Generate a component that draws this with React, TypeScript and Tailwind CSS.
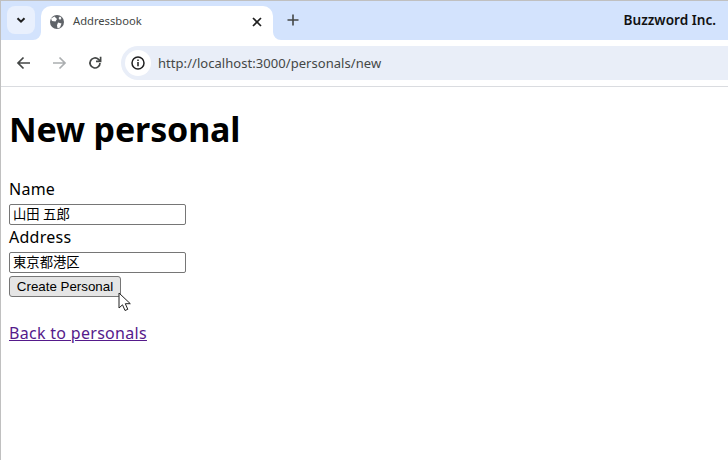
export default function App() {
  const ui = { fontFamily: '"Noto Sans","Noto Sans CJK JP",sans-serif' };
  return (
    <div className="w-[728px] h-[460px] overflow-hidden bg-white border-l border-t border-[#c0c0c0] relative flex flex-col" style={ui}>
      <div className="h-[39px] bg-[#d3e3fd] flex items-end shrink-0">
        <div className="w-[28px] h-[28px] ml-[6px] mb-[6px] rounded-lg bg-[#e9f0fd] flex items-center justify-center">
          <svg width="12" height="12" viewBox="0 0 12 12" fill="none" stroke="#1f1f1f" strokeWidth="2"><path d="M2.5 4.2 6 7.7l3.5-3.5" /></svg>
        </div>
        <div className="relative w-[232px] h-[34px] ml-[6px] bg-white rounded-t-[10px] flex items-center pl-[9px] pb-[3px]">
          <svg className="absolute left-[-8px] bottom-0" width="8" height="8" viewBox="0 0 8 8"><path d="M8 0v8H0a8 8 0 0 0 8-8z" fill="#fff" /></svg>
          <svg className="absolute right-[-8px] bottom-0" width="8" height="8" viewBox="0 0 8 8"><path d="M0 0v8h8a8 8 0 0 1-8-8z" fill="#fff" /></svg>
          <svg width="14" height="14" viewBox="0 0 14 14"><circle cx="7" cy="7" r="7" fill="#5f6368" /><path d="M4.5 1.5 7 4 5.5 6.5 2 6 1 3.5zM8 7.5l3.5 1-1.5 4-2.5.8-.5-3zM10 1.5l1.5 1.5-1.5 2L8.5 3z" fill="#fff" /></svg>
          <span className="ml-[9px] mb-[2px] text-[11.2px] leading-none text-[#444746]">Addressbook</span>
          <svg className="ml-auto mr-[11px]" width="10" height="10" viewBox="0 0 10 10" stroke="#1f1f1f" strokeWidth="1.7"><path d="M1 1l8 8M9 1l-8 8" /></svg>
        </div>
        <svg className="ml-[14px] mb-[14px]" width="12" height="12" viewBox="0 0 12 12" stroke="#444746" strokeWidth="1.6"><path d="M6 .5v11M.5 6h11" /></svg>
        <span className="ml-auto mb-[11px] mr-[12px] text-[13.6px] leading-[18px] font-semibold text-[#111]">Buzzword Inc.</span>
      </div>
      <div className="h-[46px] bg-white border-b border-[#dadce0] flex items-center shrink-0 box-content rounded-tl-[8px]">
        <div className="h-[46px] flex items-center pl-[15px]">
          <svg width="15" height="14" viewBox="0 0 15 14" fill="none" stroke="#444746" strokeWidth="1.7"><path d="M14 7H2M7.5 1.5 2 7l5.5 5.5" /></svg>
          <svg className="ml-[21px]" width="15" height="14" viewBox="0 0 15 14" fill="none" stroke="#abaeb0" strokeWidth="1.7"><path d="M1 7h12M7.5 1.5 13 7l-5.5 5.5" /></svg>
          <svg className="ml-[21px]" width="14" height="14" viewBox="0 0 14 14" fill="none" stroke="#444746" strokeWidth="1.7"><path d="M12 7a5 5 0 1 1-1.5-3.6L12.3 5" /><path d="M12.6.8v4.6H8" /></svg>
        </div>
        <div className="ml-[19px] flex-1 h-[34px] bg-[#e9eef8] rounded-l-[17px] flex items-center pl-[4px]">
          <div className="w-[26px] h-[26px] bg-white rounded-full flex items-center justify-center">
            <svg width="14" height="14" viewBox="0 0 14 14" fill="none" stroke="#1f1f1f" strokeWidth="1.5"><circle cx="7" cy="7" r="6" /><path d="M7 6v4.2M7 3.5v1.5" /></svg>
          </div>
          <span className="ml-[7px] text-[13px] leading-none text-[#444746] tracking-[0.05px]">http://localhost:3000/personals/new</span>
        </div>
      </div>
      <div className="pl-[8px] text-black flex-1">
        <h1 className="text-[34px] leading-[48px] font-bold tracking-[-0.15px] mt-[18px] mb-[24px]">New personal</h1>
        <label className="block text-[16px] leading-[24px] pb-[3px] tracking-[0.25px]">Name</label>
        <div className="w-[177px] h-[21px] border border-[#767676] rounded-[2px] pl-[3px] text-[13.33px] leading-[19px]">山田 五郎</div>
        <label className="block text-[16px] leading-[24px] pb-[3px] tracking-[0.25px]">Address</label>
        <div className="w-[177px] h-[21px] border border-[#767676] rounded-[2px] pl-[3px] text-[13.33px] leading-[19px]">東京都港区</div>
        <button className="block mt-[3px] w-[112px] h-[21px] bg-[#e5e5e5] border border-[#767676] rounded-[3px] text-[13.33px] leading-[17px] text-center" style={{ fontFamily: '"Liberation Sans",sans-serif' }}>Create Personal</button>
        <a href="#" className="block mt-[24px] text-[16px] leading-[24px] tracking-[0.3px] text-[#551a8b] underline">Back to personals</a>
      </div>
      <svg className="absolute left-[117px] top-[291px]" width="14" height="20" viewBox="0 0 14 20"><path d="M1 1v15l3.5-3.2 2.5 5.7 2.8-1.2-2.5-5.6h5z" fill="#fff" stroke="#222" strokeWidth="1" /></svg>
    </div>
  );
}
